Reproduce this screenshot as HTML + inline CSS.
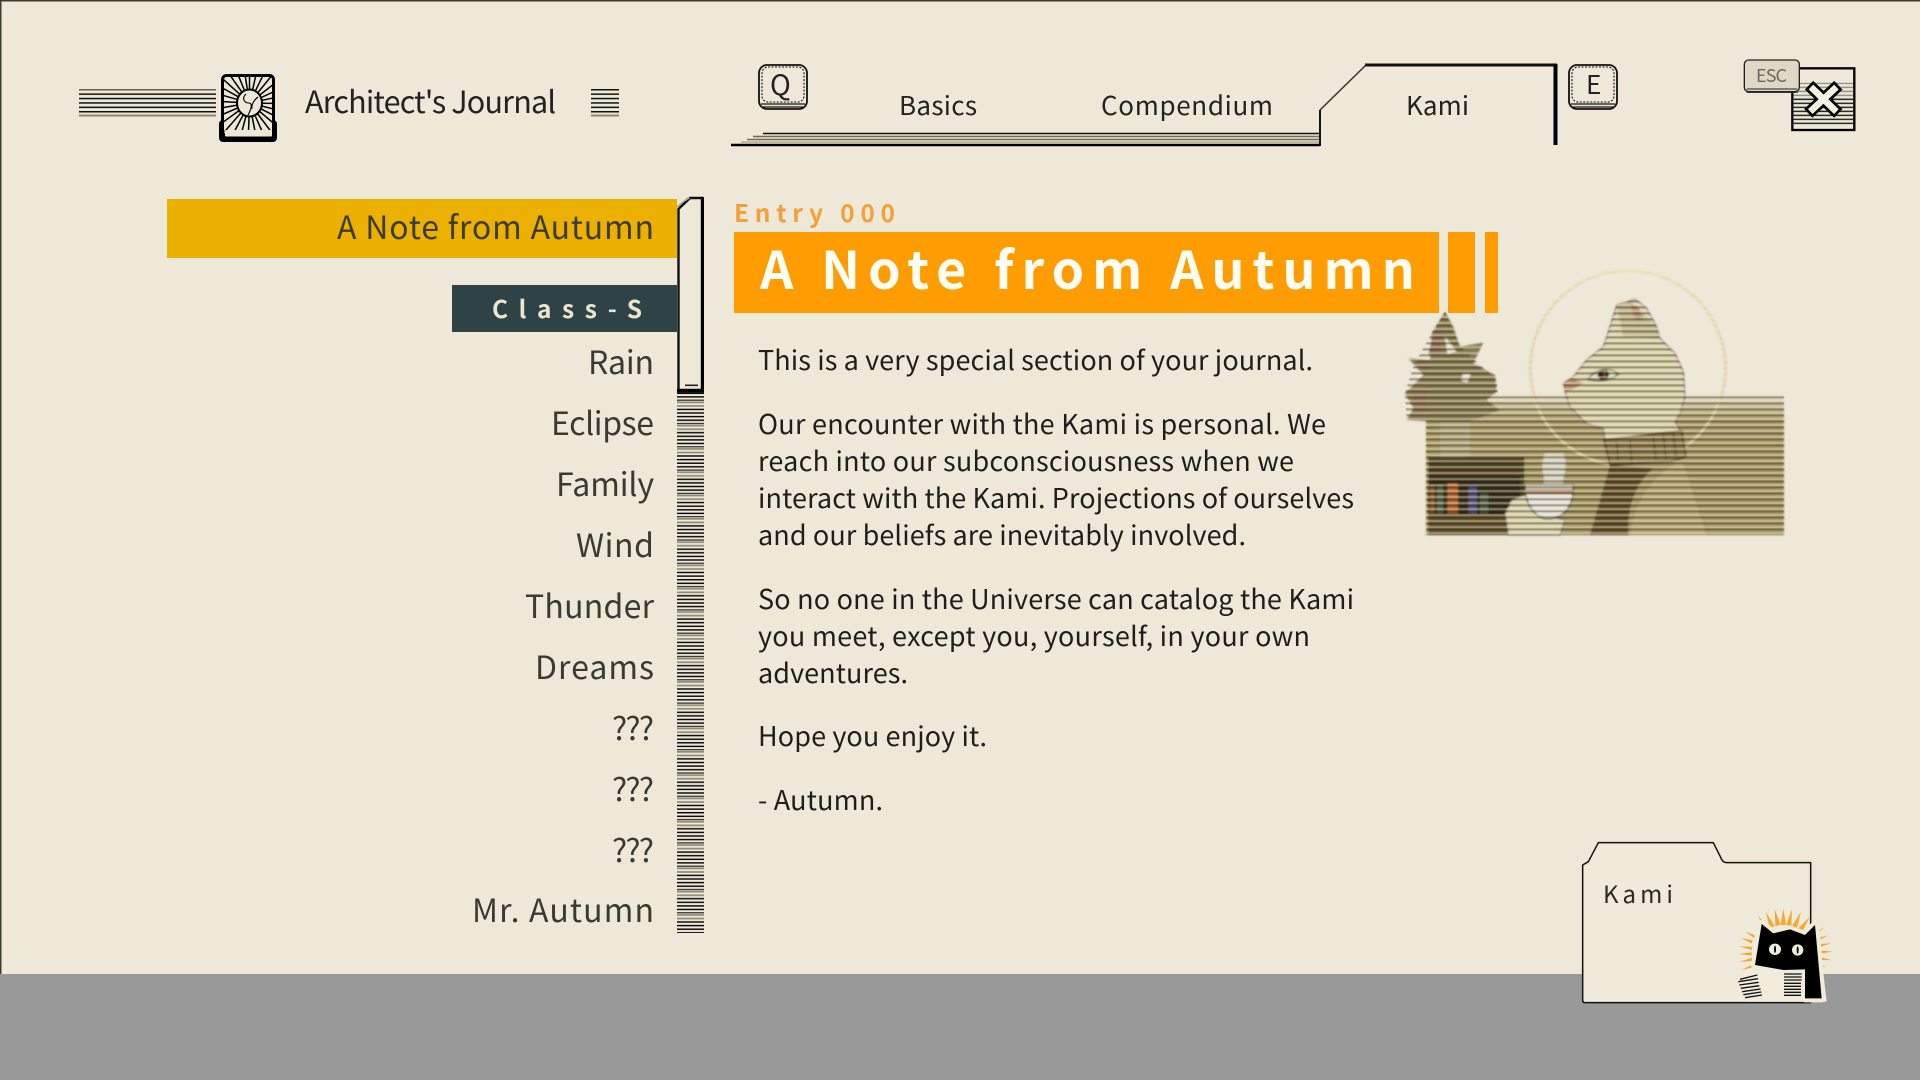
<!DOCTYPE html>
<html lang="en"><head><meta charset="utf-8"><title>Architect's Journal</title>
<style>
html,body{margin:0;padding:0;width:1920px;height:1080px;overflow:hidden;background:#ede8d7}
svg{position:absolute;left:0;top:0;display:block;filter:blur(.35px)}
text{font-family:"Noto Sans CJK JP","Liberation Sans",sans-serif}
.m{font-size:32px;fill:#3a3a35}
.b{font-size:27px;fill:#1e1e1c}
.t{font-size:26px;fill:#222}
</style></head><body>
<svg width="1920" height="1080" viewBox="0 0 1920 1080" xmlns="http://www.w3.org/2000/svg">
<defs>
<pattern id="hs" patternUnits="userSpaceOnUse" width="10" height="4.4" y="89"><rect width="10" height="1.5" fill="#111"/></pattern>
<pattern id="sb" patternUnits="userSpaceOnUse" width="10" height="23.3" y="401.5"><rect y="0" width="10" height="1.7" fill="#8e8a72"/><rect y="3.6" width="10" height="1.7" fill="#8e8a72"/><rect y="7.2" width="10" height="1.4" fill="#000"/><rect y="10.8" width="10" height="1.4" fill="#000"/><rect y="14.4" width="10" height="1.4" fill="#000"/><rect y="18" width="10" height="1.4" fill="#000"/><rect y="21.4" width="10" height="1.2" fill="#222"/></pattern>
<pattern id="cb" patternUnits="userSpaceOnUse" width="10" height="12" y="4"><rect width="10" height="4" y="4" fill="#111"/></pattern>
<pattern id="lm" patternUnits="userSpaceOnUse" width="20" height="18"><rect width="20" height="18" fill="#fff"/><rect y="0" width="20" height="7" fill="#8a8a8a"/></pattern>
<pattern id="dk" patternUnits="userSpaceOnUse" width="20" height="18"><rect y="7" width="20" height="6" fill="#2c2408" fill-opacity=".45"/></pattern>
<mask id="scan" maskUnits="userSpaceOnUse" x="0" y="0" width="1260" height="990"><rect width="1260" height="990" fill="url(#lm)"/></mask>
<linearGradient id="gr" x1="0" y1="0" x2="0" y2="1"><stop offset="0" stop-color="#ede8d7" stop-opacity="0"/><stop offset=".1" stop-color="#c9bf94"/><stop offset=".22" stop-color="#a89963"/><stop offset=".6" stop-color="#a3945c"/><stop offset="1" stop-color="#a59660"/></linearGradient>
<clipPath id="bk"><rect x="223" y="76" width="50" height="56" rx="3"/></clipPath>
<filter id="bl" x="-5%" y="-5%" width="110%" height="110%"><feGaussianBlur stdDeviation="2"/></filter>
<filter id="bs" x="-2%" y="-2%" width="104%" height="104%"><feGaussianBlur stdDeviation="1.6"/></filter>
<clipPath id="illc"><path d="M735 237L770 265 800 320 810 355 855 400 880 455 885 530 870 580 855 605 875 632 888 710 880 725 950 945H345V880L400 830 440 800 650 740 645 660 640 625 590 610 540 560 525 515 520 490 550 470 590 420 640 380 660 320 680 255Z"/><rect x="108" y="525" width="1074" height="420"/><path d="M165 275L210 380 320 480 330 570 240 605 240 715H150V605L50 600 45 520 70 440 130 330Z"/></clipPath>
<line id="ry" x1="249.5" y1="90" x2="249.5" y2="60" stroke="#000" stroke-width="1.5"/>
</defs>

<rect width="1920" height="1080" fill="#ede8d7"/>
<rect y="974" width="1920" height="106" fill="#999"/>
<rect y="0" width="1920" height="1.5" fill="#3a3a38"/>
<rect x="0" y="0" width="1.5" height="974" fill="#3a3a38"/>

<!-- header left -->
<rect x="79" y="89" width="137" height="27" fill="url(#hs)"/>
<rect x="79" y="89" width="137" height="1.5" fill="#66634f"/><rect x="79" y="114.5" width="137" height="2" fill="#8a8672"/>
<rect x="591" y="89" width="28" height="27" fill="url(#hs)"/>
<rect x="591" y="114.5" width="28" height="2" fill="#8a8672"/>

<!-- book icon -->
<g>
<rect x="219" y="120" width="58" height="22" rx="4" fill="#000"/>
<rect x="222.5" y="75.5" width="51" height="60" rx="4" fill="#ede8d7" stroke="#000" stroke-width="3"/>
<g clip-path="url(#bk)">
<use href="#ry" transform="rotate(0 249.5 103)"/><use href="#ry" transform="rotate(13 249.5 103)"/><use href="#ry" transform="rotate(26 249.5 103)"/><use href="#ry" transform="rotate(39 249.5 103)"/><use href="#ry" transform="rotate(52 249.5 103)"/><use href="#ry" transform="rotate(65 249.5 103)"/><use href="#ry" transform="rotate(78 249.5 103)"/><use href="#ry" transform="rotate(91 249.5 103)"/><use href="#ry" transform="rotate(104 249.5 103)"/><use href="#ry" transform="rotate(117 249.5 103)"/><use href="#ry" transform="rotate(130 249.5 103)"/><use href="#ry" transform="rotate(143 249.5 103)"/><use href="#ry" transform="rotate(156 249.5 103)"/><use href="#ry" transform="rotate(169 249.5 103)"/><use href="#ry" transform="rotate(182 249.5 103)"/><use href="#ry" transform="rotate(195 249.5 103)"/><use href="#ry" transform="rotate(208 249.5 103)"/><use href="#ry" transform="rotate(221 249.5 103)"/><use href="#ry" transform="rotate(234 249.5 103)"/><use href="#ry" transform="rotate(247 249.5 103)"/><use href="#ry" transform="rotate(260 249.5 103)"/><use href="#ry" transform="rotate(273 249.5 103)"/><use href="#ry" transform="rotate(286 249.5 103)"/><use href="#ry" transform="rotate(299 249.5 103)"/><use href="#ry" transform="rotate(312 249.5 103)"/><use href="#ry" transform="rotate(325 249.5 103)"/><use href="#ry" transform="rotate(338 249.5 103)"/><use href="#ry" transform="rotate(351 249.5 103)"/>
</g>
<ellipse cx="249.5" cy="103" rx="12.5" ry="13.5" fill="#ede8d7" stroke="#000" stroke-width="2"/>
<path d="M246 94c-5 5-1 9 3 9s2 7-1 12M258 97c-4 3-7 8-6 12" fill="none" stroke="#000" stroke-width="1.1"/>
<rect x="225" y="130" width="47" height="6.5" rx="1" fill="#ede8d7"/>
</g>
<text x="305" y="113" font-size="30.5" fill="#222" textLength="251">Architect's Journal</text>

<!-- keys -->
<g fill="none" stroke="#111">
<rect x="759" y="65" width="48" height="44" rx="8" stroke-width="1.8"/>
<rect x="762" y="67" width="42" height="35" rx="6" stroke-width="1.1" stroke-dasharray="2 1.5"/>
<path d="M761 104h44M763 107h40" stroke-width="1.3"/>
</g>
<text x="770" y="95" font-size="28" fill="#222" textLength="23">Q</text>
<g fill="none" stroke="#111">
<rect x="1569" y="65" width="48" height="44" rx="8" stroke-width="1.8"/>
<rect x="1572" y="67" width="42" height="35" rx="6" stroke-width="1.1" stroke-dasharray="2 1.5"/>
<path d="M1571 104h44M1573 107h40" stroke-width="1.3"/>
</g>
<text x="1586" y="94" font-size="26" fill="#222">E</text>

<!-- tabs -->
<path d="M763 133.5H1320" stroke="#111" stroke-width="1.6" fill="none"/>
<path d="M753 136.5H1320M747 139.5H1320" stroke="#6d6a52" stroke-width="1.4" fill="none"/>
<path d="M741 142H1320" stroke="#a29e86" stroke-width="1.2" fill="none"/>
<path d="M731 145H1320" stroke="#000" stroke-width="2.6" fill="none"/>
<path d="M1320 146V110" stroke="#111" stroke-width="2" fill="none"/>
<path d="M1320 110L1366 65" stroke="#333" stroke-width="1.5" fill="none"/>
<path d="M1365 65H1557" stroke="#111" stroke-width="3" fill="none"/>
<path d="M1555.5 64V145" stroke="#000" stroke-width="4" fill="none"/>
<text class="t" x="899" y="115" textLength="78">Basics</text>
<text class="t" x="1101" y="115" textLength="172">Compendium</text>
<text class="t" x="1406" y="115" textLength="63">Kami</text>

<!-- close -->
<g transform="translate(1700 40) scale(.3333)">
<rect x="277" y="85" width="186" height="185" fill="#ede8d7" stroke="#000" stroke-width="7"/>
<rect x="281" y="128" width="178" height="50" fill="url(#cb)" opacity=".45"/>
<rect x="281" y="170" width="178" height="86" fill="url(#cb)"/>
<path d="M340 148L402 208M402 148L338 208" stroke="#000" stroke-width="36" fill="none" stroke-linecap="square"/>
<path d="M340 148L402 208M402 148L338 208" stroke="#f4f1e2" stroke-width="20" fill="none" stroke-linecap="square"/>
<rect x="133" y="60" width="165" height="95" rx="13" fill="#ded9c4" stroke="#222" stroke-width="4"/>
<path d="M140 147h152" stroke="#222" stroke-width="3"/>
<path d="M139 158h155" stroke="#222" stroke-width="2"/>
</g>
<text x="1756" y="82" font-size="18" fill="#6c6a5c" textLength="31">ESC</text>

<!-- sidebar -->
<rect x="167" y="199" width="510" height="59" fill="#ebb000"/>
<text x="337" y="239" font-size="32" fill="#3c3c2e" textLength="317">A Note from Autumn</text>
<rect x="452" y="285" width="225" height="47" fill="#2f4246"/>
<text x="492" y="318" font-size="24.5" font-weight="700" fill="#e9e5d0" textLength="150">Class-S</text>
<text class="m" x="588" y="374" textLength="66">Rain</text>
<text class="m" x="551" y="435" textLength="103">Eclipse</text>
<text class="m" x="556" y="496" textLength="98">Family</text>
<text class="m" x="576" y="557" textLength="78">Wind</text>
<text class="m" x="525" y="618" textLength="129">Thunder</text>
<text class="m" x="535" y="679" textLength="119">Dreams</text>
<text class="m" x="612" y="740" textLength="42">???</text>
<text class="m" x="612" y="801" textLength="42">???</text>
<text class="m" x="612" y="862" textLength="42">???</text>
<text class="m" x="472" y="922" textLength="182">Mr. Autumn</text>

<!-- scrollbar -->
<rect x="677" y="392" width="27" height="541" fill="url(#sb)"/>
<path d="M678.5 390V209L690 198H702V390Z" fill="#ede8d7" stroke="#111" stroke-width="2.4"/>
<path d="M677 198H690L677 207Z" fill="#ede8d7"/>
<path d="M677 207L688 198" stroke="#8a8672" stroke-width="1"/>
<path d="M702.5 197V392" stroke="#000" stroke-width="3"/>
<rect x="677" y="389" width="27" height="3.5" fill="#000"/>
<rect x="685" y="384.5" width="13" height="1.6" fill="#222"/>

<!-- title -->
<text x="734" y="222" font-size="24.5" font-weight="700" fill="#f3a038" textLength="161">Entry 000</text>
<rect x="734" y="232" width="705" height="81" fill="#ff9d00"/>
<rect x="1448" y="232" width="27" height="81" fill="#ff9d00"/>
<rect x="1485" y="232" width="13" height="81" fill="#ff9d00"/>
<text x="760" y="289" font-size="52" font-weight="700" fill="#fffdf4" textLength="655">A Note from Autumn</text>

<!-- body -->
<text class="b" x="758" y="370" textLength="555">This is a very special section of your journal.</text>
<text class="b" x="758" y="434" textLength="568">Our encounter with the Kami is personal. We</text>
<text class="b" x="758" y="471" textLength="536">reach into our subconsciousness when we</text>
<text class="b" x="758" y="508" textLength="596">interact with the Kami. Projections of ourselves</text>
<text class="b" x="758" y="545" textLength="488">and our beliefs are inevitably involved.</text>
<text class="b" x="758" y="609" textLength="596">So no one in the Universe can catalog the Kami</text>
<text class="b" x="758" y="646" textLength="552">you meet, except you, yourself, in your own</text>
<text class="b" x="758" y="683" textLength="150">adventures.</text>
<text class="b" x="758" y="746" textLength="229">Hope you enjoy it.</text>
<text class="b" x="758" y="810" textLength="125">- Autumn.</text>

<!-- illustration -->
<g transform="translate(1390 220) scale(.33333)">
<g filter="url(#bs)">
<g mask="url(#scan)">
<g filter="url(#bl)">
<rect x="108" y="510" width="1074" height="435" fill="url(#gr)"/>
<circle cx="715" cy="445" r="293" fill="none" stroke="#e4a9a0" stroke-width="4" stroke-opacity=".7"/>
<circle cx="711" cy="445" r="293" fill="none" stroke="#dfe3a5" stroke-width="5"/>
<!-- pot -->
<path d="M150 605H240V715H150Z" fill="#b2a67b"/>
<!-- plant -->
<path d="M165 275L190 320 210 380 280 368 250 430 315 465 320 515 290 540 330 570 240 605H150L50 600 70 565 45 520 100 465 55 415 120 420 125 340Z" fill="#85784e"/>
<path d="M130 340L160 330 150 400 115 405ZM60 415L120 425 105 455ZM70 520L105 510 110 575 75 575Z" fill="#8d6a50"/>
<path d="M165 350L200 395 172 402Z" fill="#ede8d7"/>
<path d="M218 462L242 462 232 488 214 482Z" fill="#ede8d7"/>
<!-- shelf -->
<rect x="115" y="712" width="288" height="233" fill="#4c3c1e"/>
<rect x="115" y="770" width="275" height="120" fill="#2f2614"/>
<rect x="120" y="795" width="14" height="85" fill="#8e5a2a"/><rect x="140" y="795" width="20" height="85" fill="#566646"/><rect x="172" y="790" width="32" height="90" fill="#b75f26"/><rect x="235" y="798" width="26" height="82" fill="#4f4f82"/><rect x="270" y="820" width="25" height="60" fill="#4d5a4a"/>
<rect x="115" y="885" width="285" height="60" fill="#5c4b28"/>
<!-- cat body -->
<path d="M660 735L600 945H960L880 720Z" fill="#a1915c"/>
<path d="M720 945C730 860 780 770 860 730L880 730 950 945Z" fill="#b7a670"/>
<path d="M660 735L600 945H715C710 850 745 780 790 745Z" fill="#5e4c28"/>
<!-- cat head -->
<path d="M735 237L770 265 800 320 810 355 855 400 880 455 885 530 870 580 855 605 875 640 645 660 640 625 590 610 540 560 525 515 520 490 550 470 590 420 640 380 660 320 680 255Z" fill="#dcd6ae" stroke="#7b3c5a" stroke-width="3"/>
<path d="M680 258L715 240 800 320 810 355 700 350 690 300Z" fill="#bdb48b"/>
<path d="M720 250L735 300 760 300 745 260Z" fill="#b48c6c"/>
<path d="M520 490L550 475 580 490 540 512 522 510Z" fill="#bb8a6c"/>
<path d="M595 478C615 445 665 440 685 463 660 485 620 485 595 478Z" fill="#d9dcb8" stroke="#4f6a30" stroke-width="5"/>
<circle cx="640" cy="464" r="17" fill="#2a201e"/>
<path d="M644 450v28" stroke="#a44" stroke-width="5"/>
<!-- collar -->
<path d="M642 660L875 632 888 710 840 725 660 735Z" fill="#8c7948" stroke="#4a3c20" stroke-width="5"/>
<path d="M680 665l5 60M720 660l5 65M790 650l8 68M820 645l8 72M850 640l8 70" stroke="#5e4c28" stroke-width="5"/>
<!-- hand, cup, steam -->
<path d="M345 880L365 840 405 825 440 880 525 900 510 945H355Z" fill="#dcd6ae" stroke="#7b3c5a" stroke-width="3"/>
<path d="M405 795H550V815C545 860 525 895 470 897 430 890 410 850 405 815Z" fill="#e8e6df" stroke="#3a3a2c" stroke-width="4"/>
<rect x="408" y="808" width="140" height="14" fill="#a0663e"/>
<path d="M465 700L520 700C535 740 520 760 520 790H460C470 770 445 750 465 700Z" fill="#d9d6c6"/>
</g></g>
<g clip-path="url(#illc)"><rect width="1260" height="990" fill="url(#dk)"/></g>
</g>
</g>

<!-- folder -->
<g transform="translate(1570 820) scale(.33333)">
<path d="M38 135L55 125 85 68H430L452 112Q458 128 470 128H722V548H45Q38 548 38 540Z" fill="#efead9" stroke="#111" stroke-width="4.5" stroke-linejoin="round"/>
<!-- sunburst -->
<g fill="#f7a630">
<path d="M-8 -85L0 -135 8 -85Z" transform="translate(640 400) rotate(0)"/>
<path d="M-8 -85L0 -135 8 -85Z" transform="translate(640 400) rotate(-11)"/>
<path d="M-8 -85L0 -135 8 -85Z" transform="translate(640 400) rotate(11)"/>
<path d="M-8 -85L0 -135 8 -85Z" transform="translate(640 400) rotate(-23)"/>
<path d="M-8 -85L0 -135 8 -85Z" transform="translate(640 400) rotate(23)"/>
<path d="M-8 -85L0 -135 8 -85Z" transform="translate(640 400) rotate(-34)"/>
<path d="M-8 -85L0 -135 8 -85Z" transform="translate(640 400) rotate(36)"/>
<path d="M-4 -100L0 -132 4 -100Z" transform="translate(640 400) rotate(-60)"/>
<path d="M-5 -100L0 -135 5 -100Z" transform="translate(640 400) rotate(-70)"/>
<path d="M-5 -95L0 -135 5 -95Z" transform="translate(640 400) rotate(-81)"/>
<path d="M-5 -95L0 -135 5 -95Z" transform="translate(640 400) rotate(-91)"/>
<path d="M-5 -95L0 -135 5 -95Z" transform="translate(640 400) rotate(-101)"/>
<path d="M-5 -95L0 -135 5 -95Z" transform="translate(640 400) rotate(-112)"/>
<path d="M-3 -118L0 -145 3 -118Z" transform="translate(640 400) rotate(58)"/>
<path d="M-3 -120L0 -145 3 -120Z" transform="translate(640 400) rotate(68)"/>
<path d="M-4 -115L0 -148 4 -115Z" transform="translate(640 400) rotate(78)"/>
<path d="M-4 -115L0 -148 4 -115Z" transform="translate(640 400) rotate(88)"/>
<path d="M-4 -115L0 -146 4 -115Z" transform="translate(640 400) rotate(98)"/>
<path d="M-3 -115L0 -135 3 -115Z" transform="translate(640 400) rotate(108)"/>
</g>
<!-- sticker -->
<path d="M575 312L610 340 660 328 705 345 735 315 755 535H705V450L640 450 555 435Z" fill="#f0ebdb" stroke="#f0ebdb" stroke-width="24" stroke-linejoin="round"/>
<path d="M505 478L565 450 640 450 705 450 760 460 770 545 530 545 520 535Z" fill="#f0ebdb"/>
<path d="M575 312L610 340 660 328 705 345 735 315 755 535H705V448L640 450 555 435Z" fill="#000"/>
<ellipse cx="615" cy="388" rx="18" ry="17" fill="#f0ebdb"/><ellipse cx="683" cy="390" rx="17" ry="17" fill="#f0ebdb"/>
<ellipse cx="615" cy="388" rx="3" ry="11" fill="#000"/><ellipse cx="683" cy="390" rx="3" ry="11" fill="#000"/>
<path d="M510 478L562 465M505 485L564 476M508 495L566 487M512 505L568 497M516 515L572 507M520 524L574 516M525 533L576 525" stroke="#111" stroke-width="4"/>
<path d="M642 462H695M642 471H695M642 480H695M642 490H693M642 499H693M642 508H693M642 517H693M642 526H693" stroke="#111" stroke-width="4"/>
</g>
<text x="1603" y="903" font-size="24" fill="#2a2a26" textLength="70">Kami</text>
</svg>
</body></html>
